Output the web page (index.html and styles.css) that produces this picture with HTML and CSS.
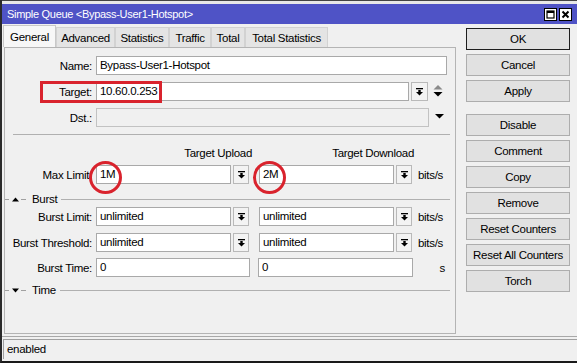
FILE: index.html
```html
<!DOCTYPE html>
<html lang="en">
<head>
    <meta charset="UTF-8">
    <title>Simple Queue</title>
    <link rel="stylesheet" href="styles.css">
</head>
<body>
    <div class="window">
        <div class="topline"></div>

        <!-- barre de titre -->
        <div class="titlebar">
            <span class="title">Simple Queue &lt;Bypass-User1-Hotspot&gt;</span>
            <div class="winbtns">
                <span class="winbtn">
                    <svg width="11" height="11" viewBox="0 0 11 11"><rect x="2" y="2" width="7" height="7" fill="none" stroke="#000" stroke-width="1.2"/><rect x="2" y="2" width="7" height="2" fill="#000"/></svg>
                </span>
                <span class="winbtn">
                    <svg width="11" height="11" viewBox="0 0 11 11"><path d="M2.5 2.5 L8.5 8.5 M8.5 2.5 L2.5 8.5" stroke="#000" stroke-width="2"/></svg>
                </span>
            </div>
        </div>

        <div class="main">
            <div class="left">
                <div class="tabs">
                    <div class="tab active">General</div>
                    <div class="tab t-adv">Advanced</div>
                    <div class="tab t-stat">Statistics</div>
                    <div class="tab t-traf">Traffic</div>
                    <div class="tab t-total">Total</div>
                    <div class="tab t-tstat">Total Statistics</div>
                </div>

                <div class="page">
                    <div class="row">
                        <span class="lbl">Name:</span>
                        <div class="field w-name">Bypass-User1-Hotspot</div>
                    </div>
                    <div class="row">
                        <span class="lbl">Target:</span>
                        <div class="field w-target">10.60.0.253</div>
                        <span class="dd"><svg width="7" height="8" viewBox="0 0 7 8"><rect x="0" y="0" width="7" height="1.3" fill="#000"/><rect x="2.3" y="2" width="2.4" height="2.2" fill="#000"/><polygon points="0,4 7,4 3.5,7.6" fill="#000"/></svg></span>
                        <span class="updown"><svg width="10" height="19" viewBox="0 0 10 19"><polygon points="0.5,7.5 9.5,7.5 5,3" fill="#8a8a8a"/><polygon points="0.5,10 9.5,10 5,14.5" fill="#000"/></svg></span>
                    </div>
                    <div class="row">
                        <span class="lbl">Dst.:</span>
                        <div class="field off w-dst"></div>
                        <span class="tri"><svg width="9" height="19" viewBox="0 0 9 19"><polygon points="0,6 9,6 4.5,10.5" fill="#000"/></svg></span>
                    </div>

                    <div class="sep"></div>

                    <div class="heads">
                        <span class="head h-up">Target Upload</span>
                        <span class="head h-down">Target Download</span>
                    </div>

                    <div class="row r-max">
                        <span class="lbl">Max Limit:</span>
                        <div class="field w-col">1M</div>
                        <span class="dd dd-s"><svg width="7" height="8" viewBox="0 0 7 8"><rect x="0" y="0" width="7" height="1.3" fill="#000"/><rect x="2.3" y="2" width="2.4" height="2.2" fill="#000"/><polygon points="0,4 7,4 3.5,7.6" fill="#000"/></svg></span>
                        <div class="field w-col col2">2M</div>
                        <span class="dd dd-s"><svg width="7" height="8" viewBox="0 0 7 8"><rect x="0" y="0" width="7" height="1.3" fill="#000"/><rect x="2.3" y="2" width="2.4" height="2.2" fill="#000"/><polygon points="0,4 7,4 3.5,7.6" fill="#000"/></svg></span>
                        <span class="unit">bits/s</span>
                    </div>

                    <div class="section s-burst">
                        <span class="dash"></span>
                        <svg class="sec-tri" width="7" height="5" viewBox="0 0 7 5"><polygon points="0,4.5 7,4.5 3.5,0.5" fill="#000"/></svg>
                        <span class="dash d2"></span>
                        <span class="sec-name">Burst</span>
                        <span class="sec-line"></span>
                    </div>

                    <div class="row r-b1">
                        <span class="lbl">Burst Limit:</span>
                        <div class="field w-col">unlimited</div>
                        <span class="dd dd-s"><svg width="7" height="8" viewBox="0 0 7 8"><rect x="0" y="0" width="7" height="1.3" fill="#000"/><rect x="2.3" y="2" width="2.4" height="2.2" fill="#000"/><polygon points="0,4 7,4 3.5,7.6" fill="#000"/></svg></span>
                        <div class="field w-col col2">unlimited</div>
                        <span class="dd dd-s"><svg width="7" height="8" viewBox="0 0 7 8"><rect x="0" y="0" width="7" height="1.3" fill="#000"/><rect x="2.3" y="2" width="2.4" height="2.2" fill="#000"/><polygon points="0,4 7,4 3.5,7.6" fill="#000"/></svg></span>
                        <span class="unit">bits/s</span>
                    </div>
                    <div class="row r-b2">
                        <span class="lbl">Burst Threshold:</span>
                        <div class="field w-col">unlimited</div>
                        <span class="dd dd-s"><svg width="7" height="8" viewBox="0 0 7 8"><rect x="0" y="0" width="7" height="1.3" fill="#000"/><rect x="2.3" y="2" width="2.4" height="2.2" fill="#000"/><polygon points="0,4 7,4 3.5,7.6" fill="#000"/></svg></span>
                        <div class="field w-col col2">unlimited</div>
                        <span class="dd dd-s"><svg width="7" height="8" viewBox="0 0 7 8"><rect x="0" y="0" width="7" height="1.3" fill="#000"/><rect x="2.3" y="2" width="2.4" height="2.2" fill="#000"/><polygon points="0,4 7,4 3.5,7.6" fill="#000"/></svg></span>
                        <span class="unit">bits/s</span>
                    </div>
                    <div class="row r-b3">
                        <span class="lbl">Burst Time:</span>
                        <div class="field w-time">0</div>
                        <div class="field w-time2">0</div>
                        <span class="unit u-s">s</span>
                    </div>

                    <div class="section s-time">
                        <span class="dash"></span>
                        <svg class="sec-tri" width="7" height="5" viewBox="0 0 7 5"><polygon points="0,0.5 7,0.5 3.5,4.5" fill="#000"/></svg>
                        <span class="dash d2"></span>
                        <span class="sec-name">Time</span>
                        <span class="sec-line"></span>
                    </div>

                    <!-- annotations rouges -->
                    <div class="mark box-target"></div>
                    <div class="mark ring ring-1"></div>
                    <div class="mark ring ring-2"></div>
                </div>
            </div>

            <div class="buttons">
                <div class="btn default">OK</div>
                <div class="btn">Cancel</div>
                <div class="btn">Apply</div>
                <div class="btn spaced">Disable</div>
                <div class="btn">Comment</div>
                <div class="btn">Copy</div>
                <div class="btn">Remove</div>
                <div class="btn">Reset Counters</div>
                <div class="btn">Reset All Counters</div>
                <div class="btn">Torch</div>
            </div>
        </div>

        <div class="status-sep"></div>
        <div class="status">enabled</div>
    </div>
</body>
</html>
```

FILE: styles.css
```css
body {
    margin: 0;
    padding: 0;
    background-color: #f0f0f0;
    font-family: "Liberation Sans", Arial, sans-serif;
    font-size: 11.5px;
    letter-spacing: -0.3px;
    color: #000;
}

.window {
    width: 577px;
    height: 363px;
    box-sizing: border-box;
    border-left: 2px solid #2a2a2a;
    border-bottom: 2px solid #1a1a1a;
    background-color: #f0f0f0;
    display: flex;
    flex-direction: column;
    overflow: hidden;
}

.topline {
    height: 4px;
    box-sizing: border-box;
    background-color: #e8e8e8;
    border-top: 1px solid #444;
}

.titlebar {
    height: 20px;
    background-color: #4f53c6;
    color: #fff;
    display: flex;
    align-items: center;
    justify-content: space-between;
    padding-left: 5px;
}

.title {
    font-size: 11px;
}

.winbtns {
    display: flex;
    gap: 2px;
    margin-right: 5px;
}

.winbtn {
    width: 13px;
    height: 13px;
    box-sizing: border-box;
    background-color: #fff;
    border: 1px solid #000;
    display: flex;
    align-items: center;
    justify-content: center;
}

.main {
    height: 310px;
    display: flex;
    padding-top: 3px;
    box-sizing: border-box;
}

.left {
    width: 452px;
    margin-left: 2px;
    display: flex;
    flex-direction: column;
}

/* onglets */
.tabs {
    display: flex;
    height: 20px;
    position: relative;
    z-index: 1;
}

.tab {
    height: 20px;
    box-sizing: border-box;
    border: 1px solid #d2d2d2;
    border-bottom: none;
    background-color: #e4e4e4;
    display: flex;
    align-items: center;
    justify-content: center;
}

.tab.active {
    width: 53px;
    height: 22px;
    margin-top: -2px;
    margin-left: -1px;
    background-color: #f7f7f7;
    border-color: #c8c8c8;
}

.t-adv { width: 59px; }
.t-stat { width: 54px; }
.t-traf { width: 42px; }
.t-total { width: 34px; }
.t-tstat { width: 83px; }

.page {
    flex: 1;
    position: relative;
    border: 1px solid #b4b4b4;
    background-color: #f0f0f0;
    padding-top: 8px;
    box-sizing: border-box;
}

.row {
    display: flex;
    align-items: center;
    height: 19px;
    margin-bottom: 7px;
}

.lbl {
    width: 91px;
    padding-right: 4px;
    box-sizing: border-box;
    text-align: right;
    white-space: nowrap;
}

.field {
    height: 19px;
    box-sizing: border-box;
    border: 1px solid #a9a9a9;
    background-color: #fff;
    padding-left: 3px;
    line-height: 17px;
    white-space: nowrap;
    overflow: hidden;
}

.field.off {
    background-color: #f0f0f0;
    border-color: #c2c2c2;
}

.w-name { width: 351px; }
.w-target { width: 313px; }
.w-dst { width: 333px; }
.w-col { width: 135px; }
.w-time { width: 154px; }
.w-time2 { width: 155px; margin-left: 8px; }

.col2 { margin-left: 10px; }

.dd {
    width: 17px;
    height: 19px;
    box-sizing: border-box;
    margin-left: 2px;
    border: 1px solid #b9b9b9;
    background-color: #f3f3f3;
    display: flex;
    align-items: center;
    justify-content: center;
}

.dd-s {
    width: 16px;
}

.updown {
    margin-left: 5px;
    display: flex;
}

.tri {
    margin-left: 6px;
    display: flex;
}

.unit {
    margin-left: 6px;
}

.u-s {
    width: 32px;
    margin-left: 0;
    text-align: right;
}

.sep {
    height: 1px;
    width: 437px;
    margin: 2px 0 0 8px;
    background-color: #b0b0b0;
}

.heads {
    display: flex;
    height: 14px;
    line-height: 14px;
    margin-top: 11px;
    padding-left: 91px;
}

.head {
    text-align: right;
}

.h-up { width: 156px; }
.h-down { width: 162px; }

.r-max { margin-top: 5px; margin-bottom: 0; }

.section {
    display: flex;
    align-items: center;
    height: 14px;
}

.s-burst { margin-top: 8px; margin-bottom: 1px; }
.s-time { margin-top: -1px; }

.dash {
    width: 4px;
    height: 1px;
    background-color: #a0a0a0;
    margin-left: 0;
}

.sec-tri {
    margin-left: 3px;
}

.dash.d2 {
    margin-left: 2px;
    width: 5px;
}

.sec-name {
    margin-left: 6px;
}

.sec-line {
    flex: 1;
    height: 1px;
    margin: 0 5px 0 4px;
    background-color: #b0b0b0;
}

.r-b2 { margin-bottom: 6px; }

/* boutons de droite */
.buttons {
    width: 104px;
    margin-left: 10px;
    margin-top: 1px;
    display: flex;
    flex-direction: column;
    gap: 4px;
}

.btn {
    height: 22px;
    box-sizing: border-box;
    border: 1px solid #adadad;
    background-color: #e1e1e1;
    display: flex;
    align-items: center;
    justify-content: center;
    white-space: nowrap;
}

.btn.default {
    border-color: #1e1e1e;
}

.btn.spaced {
    margin-top: 8px;
}

/* barre d'état */
.status-sep {
    height: 1px;
    margin-top: 2px;
    background-color: #a8a8a8;
}

.status {
    height: 20px;
    margin-top: 2px;
    margin-left: 1px;
    box-sizing: border-box;
    border-top: 1px solid #a0a0a0;
    border-left: 1px solid #a0a0a0;
    padding-left: 3px;
    line-height: 19px;
}

/* annotations */
.mark {
    position: absolute;
    box-sizing: border-box;
    border: 3px solid #d9232d;
}

.box-target {
    left: 35px;
    top: 33px;
    width: 122px;
    height: 22px;
}

.ring {
    border-radius: 50%;
    width: 33px;
    height: 33px;
    top: 113px;
}

.ring-1 { left: 84px; }
.ring-2 { left: 248px; }
```
